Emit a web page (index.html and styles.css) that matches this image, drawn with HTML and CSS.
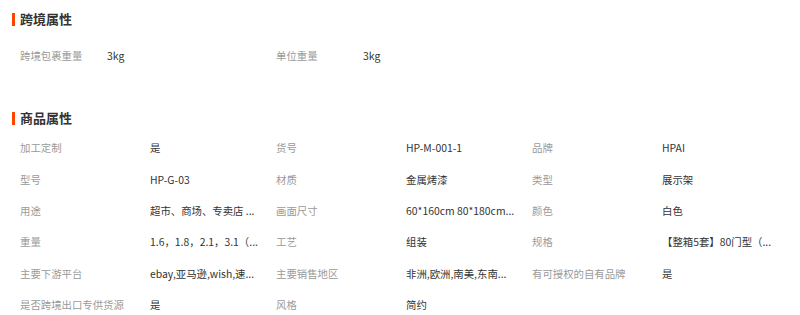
FILE: index.html
```html
<!DOCTYPE html>
<html lang="zh">
<head>
<meta charset="utf-8">
<link rel="stylesheet" href="styles.css">
</head>
<body>
<div class="page">
  <div class="section-title first">跨境属性</div>
  <div class="grid grid-small">
    <div class="label">跨境包裹重量</div><div class="value">3kg</div>
    <div class="label">单位重量</div><div class="value">3kg</div>
  </div>

  <div class="section-title second">商品属性</div>
  <div class="grid grid-main">
    <div class="label">加工定制</div><div class="value">是</div>
    <div class="label">货号</div><div class="value">HP-M-001-1</div>
    <div class="label">品牌</div><div class="value">HPAI</div>

    <div class="label">型号</div><div class="value">HP-G-03</div>
    <div class="label">材质</div><div class="value">金属烤漆</div>
    <div class="label">类型</div><div class="value">展示架</div>

    <div class="label">用途</div><div class="value">超市、商场、专卖店 ...</div>
    <div class="label">画面尺寸</div><div class="value">60*160cm 80*180cm...</div>
    <div class="label">颜色</div><div class="value">白色</div>

    <div class="label">重量</div><div class="value">1.6，1.8，2.1，3.1（...</div>
    <div class="label">工艺</div><div class="value">组装</div>
    <div class="label">规格</div><div class="value">【整箱5套】80门型（...</div>

    <div class="label">主要下游平台</div><div class="value">ebay,亚马逊,wish,速...</div>
    <div class="label">主要销售地区</div><div class="value">非洲,欧洲,南美,东南...</div>
    <div class="label">有可授权的自有品牌</div><div class="value">是</div>

    <div class="label">是否跨境出口专供货源</div><div class="value">是</div>
    <div class="label">风格</div><div class="value">简约</div>
  </div>
</div>
</body>
</html>
```

FILE: styles.css
```css
html, body {
  margin: 0;
  padding: 0;
  background: #ffffff;
}
body {
  font-family: "Noto Sans CJK SC", "Noto Sans", sans-serif;
  font-size: 10.4px;
  color: #333333;
}
.page {
  padding-left: 20px;
  width: 780px;
}
.section-title {
  position: relative;
  height: 24px;
  line-height: 24px;
  font-size: 13px;
  font-weight: bold;
  color: #333333;
}
.section-title::before {
  content: "";
  position: absolute;
  left: -8px;
  top: 5.5px;
  width: 3px;
  height: 13px;
  background: #ff4400;
}
.section-title.first {
  margin-top: 7px;
}
.section-title.second {
  margin-top: 34.5px;
}
.grid {
  display: grid;
  grid-auto-rows: 31.3px;
  align-items: center;
}
.grid-small {
  margin-top: 9.5px;
  grid-template-columns: 87px 169px 87px 169px;
}
.grid-main {
  margin-top: 2.5px;
  grid-template-columns: 130px 126px 130px 126px 130px 126px;
}
.label {
  color: #9a9a9a;
  white-space: nowrap;
  line-height: 16px;
}
.value {
  color: #333333;
  white-space: nowrap;
  overflow: hidden;
  text-overflow: ellipsis;
  max-width: 118px;
  line-height: 16px;
}
.grid-small .value {
  max-width: 160px;
}
```
